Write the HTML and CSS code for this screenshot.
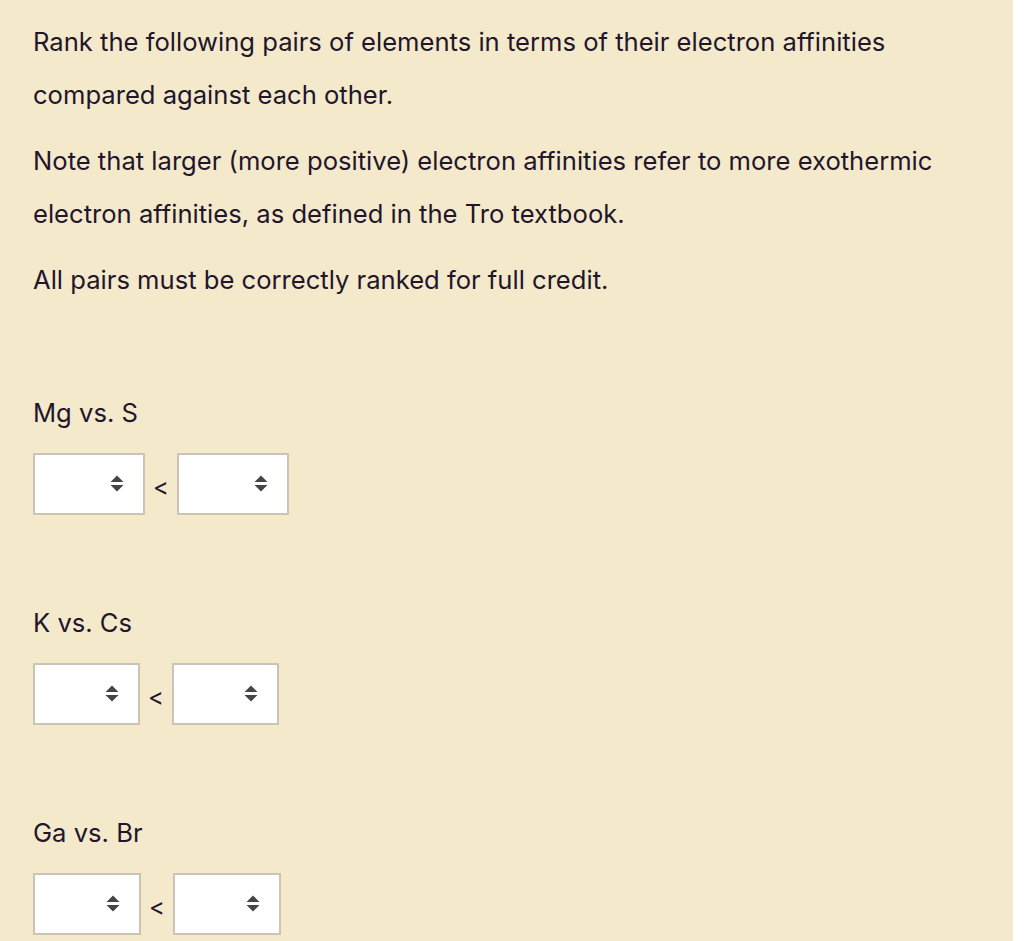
FILE: index.html
```html
<!DOCTYPE html>
<html lang="en">
<head>
<meta charset="utf-8">
<title>Electron affinities</title>
<link rel="stylesheet" href="styles.css">
</head>
<body>
<main class="panel">
  <p class="para">Rank the following pairs of elements in terms of their electron affinities compared against each other.</p>
  <p class="para">Note that larger (more positive) electron affinities refer to more exothermic electron affinities, as defined in the Tro textbook.</p>
  <p class="para">All pairs must be correctly ranked for full credit.</p>

  <section class="pair first">
    <div class="label">Mg vs. S</div>
    <div class="row">
      <span class="sel w112"><select aria-label="Mg vs. S left"><option></option><option>Mg</option><option>S</option></select><svg class="arrows" width="14" height="17" viewBox="0 0 14 17"><path d="M7 0.5 L13.5 7 H0.5 Z M7 16.5 L13.5 10 H0.5 Z" fill="#454545"/></svg></span>
      <span class="lt">&lt;</span>
      <span class="sel w112"><select aria-label="Mg vs. S right"><option></option><option>Mg</option><option>S</option></select><svg class="arrows" width="14" height="17" viewBox="0 0 14 17"><path d="M7 0.5 L13.5 7 H0.5 Z M7 16.5 L13.5 10 H0.5 Z" fill="#454545"/></svg></span>
    </div>
  </section>

  <section class="pair">
    <div class="label">K vs. Cs</div>
    <div class="row">
      <span class="sel w107"><select aria-label="K vs. Cs left"><option></option><option>K</option><option>Cs</option></select><svg class="arrows" width="14" height="17" viewBox="0 0 14 17"><path d="M7 0.5 L13.5 7 H0.5 Z M7 16.5 L13.5 10 H0.5 Z" fill="#454545"/></svg></span>
      <span class="lt">&lt;</span>
      <span class="sel w107"><select aria-label="K vs. Cs right"><option></option><option>K</option><option>Cs</option></select><svg class="arrows" width="14" height="17" viewBox="0 0 14 17"><path d="M7 0.5 L13.5 7 H0.5 Z M7 16.5 L13.5 10 H0.5 Z" fill="#454545"/></svg></span>
    </div>
  </section>

  <section class="pair">
    <div class="label">Ga vs. Br</div>
    <div class="row">
      <span class="sel w108"><select aria-label="Ga vs. Br left"><option></option><option>Ga</option><option>Br</option></select><svg class="arrows" width="14" height="17" viewBox="0 0 14 17"><path d="M7 0.5 L13.5 7 H0.5 Z M7 16.5 L13.5 10 H0.5 Z" fill="#454545"/></svg></span>
      <span class="lt">&lt;</span>
      <span class="sel w108"><select aria-label="Ga vs. Br right"><option></option><option>Ga</option><option>Br</option></select><svg class="arrows" width="14" height="17" viewBox="0 0 14 17"><path d="M7 0.5 L13.5 7 H0.5 Z M7 16.5 L13.5 10 H0.5 Z" fill="#454545"/></svg></span>
    </div>
  </section>
</main>
</body>
</html>
```
FILE: styles.css
```css
html, body {
  margin: 0;
  padding: 0;
  background: #ffffff;
}
body {
  font-family: Inter, "Open Sans", "Liberation Sans", sans-serif;
  color: #21162b;
}
.panel {
  width: 1013px;
  min-height: 941px;
  box-sizing: border-box;
  background: #f5e9cb;
  padding: 15px 0 0 33px;
}
.para {
  margin: 0 0 13px 0;
  font-size: 25.6px;
  line-height: 53px;
  max-width: 930px;
}
.pair {
  display: flex;
  flex-direction: column;
}
.pair.first {
  margin-top: 92px;
}
.pair + .pair {
  margin-top: 93px;
}
.label {
  font-size: 25.6px;
  line-height: 30px;
  height: 30px;
}
.row {
  margin-top: 25px;
  display: flex;
  align-items: center;
}
.sel {
  position: relative;
  display: inline-block;
  height: 62px;
}
.w112 { width: 112px; }
.w107 { width: 107px; }
.w108 { width: 108px; }
.sel select {
  appearance: none;
  -webkit-appearance: none;
  width: 100%;
  height: 100%;
  box-sizing: border-box;
  border: 2px solid #cdc3b4;
  border-radius: 0;
  background: #ffffff;
  margin: 0;
  padding: 0 10px;
  font: inherit;
}
.arrows {
  position: absolute;
  right: 21px;
  top: 22px;
  pointer-events: none;
}
.lt {
  width: 32px;
  text-align: center;
  font-size: 24px;
  line-height: 26px;
  padding-top: 6px;
}
```
